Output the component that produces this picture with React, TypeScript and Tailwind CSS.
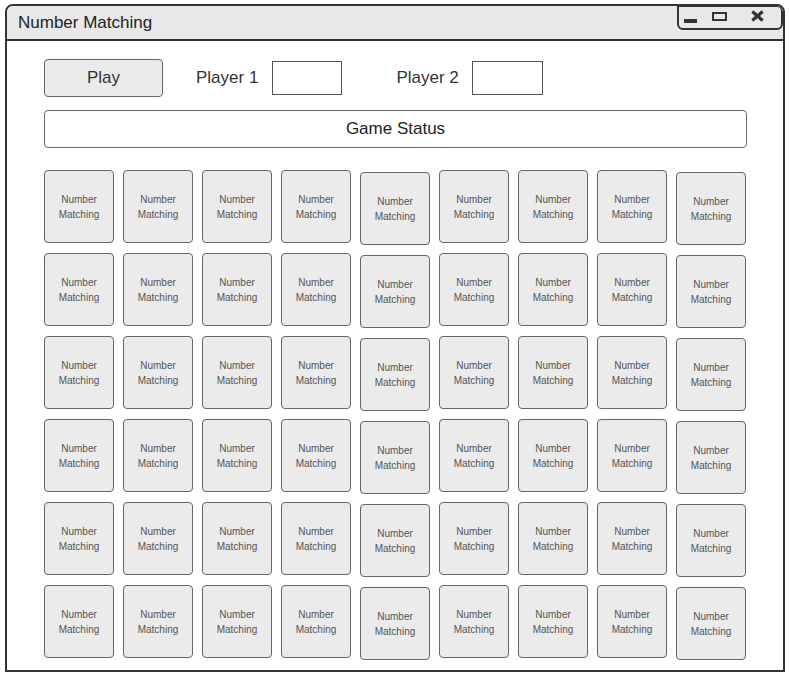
import React from 'react';

const COLS = 9;
const ROWS = 6;

function Tile({ col }: { col: number }) {
  // a couple of columns sit a hair lower in the mockup
  const nudge = col === 4 || col === 8 ? 'translate-y-[2px]' : '';
  return (
    <div
      className={`w-[70px] h-[73px] rounded-[4px] border-[1.5px] border-[#666] bg-[#ebebeb] flex flex-col items-center justify-center text-[10px] leading-[15px] text-[#555] ${nudge}`}
    >
      <span>Number</span>
      <span>Matching</span>
    </div>
  );
}

function WindowControls() {
  return (
    <div className="w-[106px] h-[25px] -mt-[1px] rounded-b-[6px] rounded-tr-[6px] border-2 border-[#333] flex items-center pl-[5px]">
      <div className="w-[13px] h-[4px] bg-[#333] mt-[7px]" />
      <div className="w-[15px] h-[9px] border-2 border-[#333] ml-[15px] mb-[3px]" />
      <svg width="13" height="12" viewBox="0 0 13 12" className="ml-[24px] mb-[3px]">
        <path d="M2.5 2.5 L10.5 9.5 M10.5 2.5 L2.5 9.5" stroke="#333" strokeWidth="3.2" strokeLinecap="square" />
      </svg>
    </div>
  );
}

export default function App() {
  return (
    <div className="w-[789px] h-[675px] bg-white pt-[4px] pl-[5px] font-['Liberation_Sans',Arial,sans-serif]">
      <div className="w-[780px] h-[668px] border-2 border-[#333] rounded-t-[8px] overflow-hidden flex flex-col">
        <div className="h-[35px] bg-[#e8e8e8] border-b-2 border-[#333] flex justify-between items-start">
          <span className="self-center pl-[11px] text-[17px] text-[#222]">Number Matching</span>
          <WindowControls />
        </div>

        <div className="pl-[37px] pt-[18px] flex flex-col">
          <div className="flex items-center">
            <button className="w-[119px] h-[38px] rounded-[4px] border-[1.5px] border-[#666] bg-[#ebebeb] text-[17px] text-[#333]">
              Play
            </button>
            <span className="ml-[33px] text-[17px] text-[#333]">Player 1</span>
            <div className="ml-[14px] w-[70px] h-[34px] border-[1.5px] border-[#555] bg-white" />
            <span className="ml-[54px] text-[17px] text-[#333]">Player 2</span>
            <div className="ml-[13px] w-[71px] h-[34px] border-[1.5px] border-[#555] bg-white" />
          </div>

          <div className="mt-[13px] w-[703px] h-[38px] rounded-[4px] border-[1.5px] border-[#666] flex items-center justify-center text-[17px] text-[#222]">
            Game Status
          </div>

          <div className="mt-[22px] grid grid-cols-[repeat(9,70px)] gap-x-[9px] gap-y-[10px] items-start">
            {Array.from({ length: ROWS * COLS }, (_, i) => (
              <Tile key={i} col={i % COLS} />
            ))}
          </div>
        </div>
      </div>
    </div>
  );
}
